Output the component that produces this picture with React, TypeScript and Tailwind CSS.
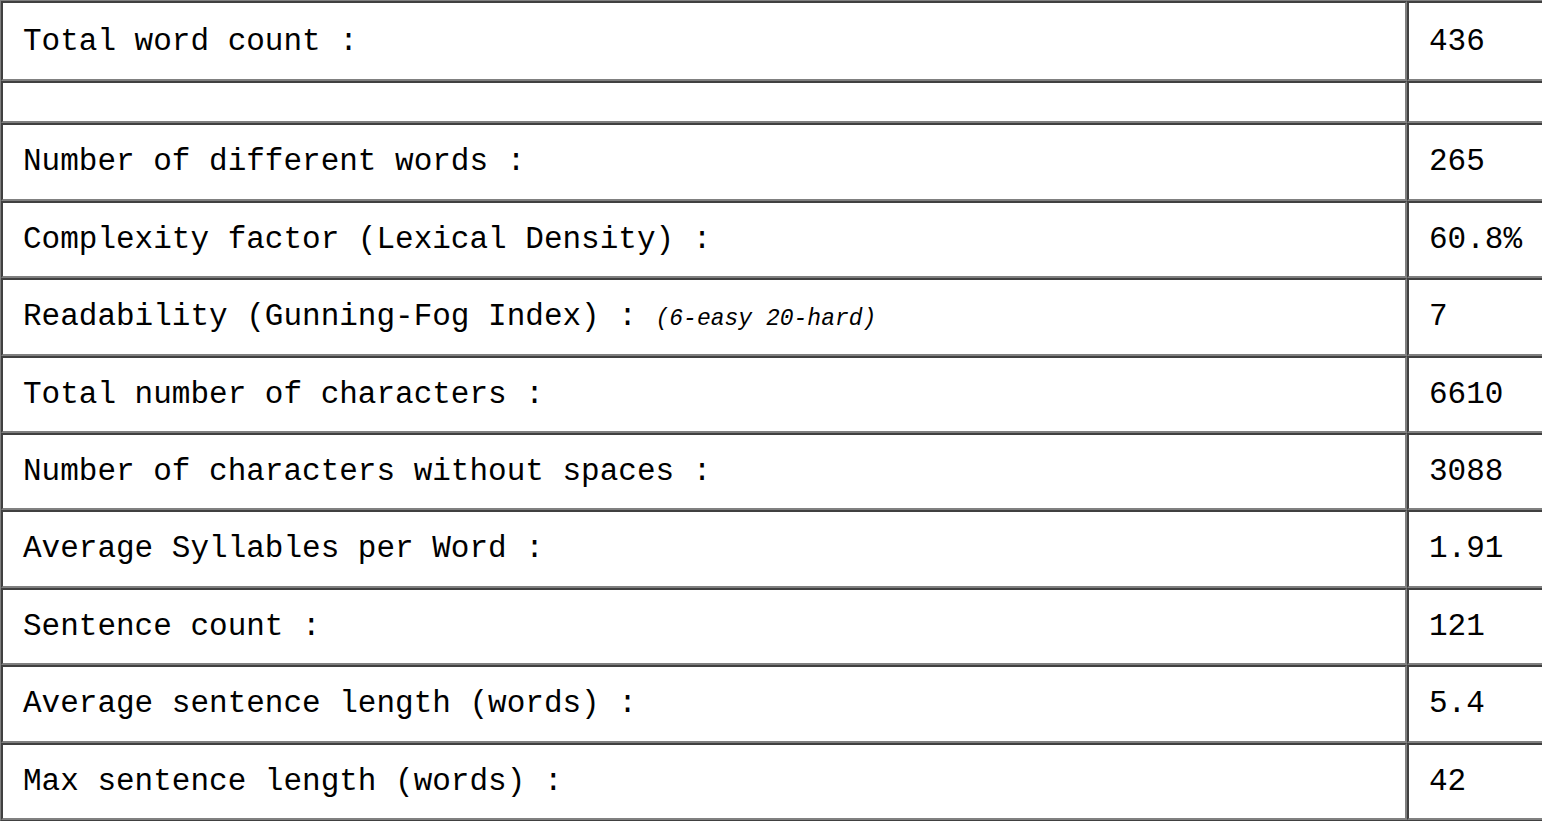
const stats: { label: string; note?: string; value: string }[] = [
  { label: "Total word count :", value: "436" },
  { label: "", value: "" },
  { label: "Number of different words :", value: "265" },
  { label: "Complexity factor (Lexical Density) :", value: "60.8%" },
  { label: "Readability (Gunning-Fog Index) :", note: "(6-easy 20-hard)", value: "7" },
  { label: "Total number of characters :", value: "6610" },
  { label: "Number of characters without spaces :", value: "3088" },
  { label: "Average Syllables per Word :", value: "1.91" },
  { label: "Sentence count :", value: "121" },
  { label: "Average sentence length (words) :", value: "5.4" },
  { label: "Max sentence length (words) :", value: "42" },
];

const cell =
  "border-2 border-t-[#404040] border-l-[#404040] border-b-[#808080] border-r-[#808080] px-[20px] whitespace-pre";

export default function App() {
  return (
    <div className="h-[821px] w-[1542px] overflow-hidden bg-white">
      <table className="w-[1620px] table-fixed border-separate border-spacing-0 border border-t-[#808080] border-l-[#808080] border-b-[#404040] border-r-[#404040] font-['Courier_New','Liberation_Mono',monospace] text-[31px] leading-[35.4px] text-black">
        <colgroup>
          <col className="w-[1406px]" />
          <col />
        </colgroup>
        <tbody>
          {stats.map((row, i) => {
            const pad = i === 0 ? "pt-[21px] pb-[20px]" : "py-[19px]";
            return (
              <tr key={i}>
                <td className={`${cell} ${pad}`}>
                  {row.label}
                  {row.note && (
                    <>
                      {" "}
                      <i className="text-[23px] leading-none">{row.note}</i>
                    </>
                  )}
                </td>
                <td className={`${cell} ${pad}`}>{row.value}</td>
              </tr>
            );
          })}
        </tbody>
      </table>
    </div>
  );
}
